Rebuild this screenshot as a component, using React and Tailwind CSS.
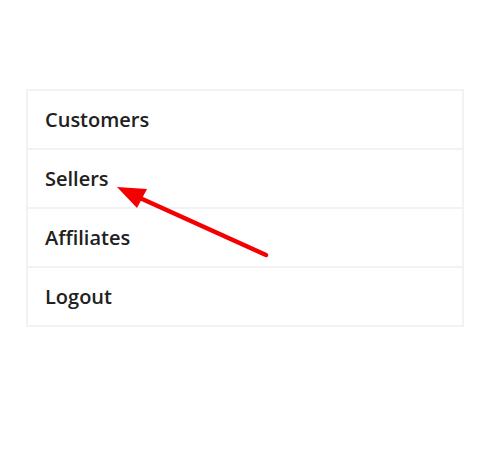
import React from 'react';

const items = ['Customers', 'Sellers', 'Affiliates', 'Logout'];

const App = () => {
    return (
        <div className="relative w-[492px] h-[463px] bg-white" style={{ fontFamily: '"Open Sans", "Noto Sans", sans-serif' }}>
            <div className="pt-[89px] pl-[26px]">
                <ul className="w-[438px] border-2 border-[#f2f2f2]">
                    {items.map((item, i) => (
                        <li
                            key={item}
                            className={`h-[57px] flex items-center pl-[17px] text-[20px] font-semibold text-[#212121] ${i > 0 ? 'border-t-2 border-[#f2f2f2] h-[59px]' : ''}`}
                        >
                            {item}
                        </li>
                    ))}
                </ul>
            </div>

            {/* annotation arrow */}
            <svg className="absolute left-0 top-0" width="492" height="463" viewBox="0 0 492 463">
                <line x1="266" y1="255" x2="140" y2="198" stroke="#f40000" strokeWidth="4.5" strokeLinecap="round" />
                <polygon points="117,187 147,189 137,208" fill="#f40000" />
            </svg>
        </div>
    );
};

export default App;
